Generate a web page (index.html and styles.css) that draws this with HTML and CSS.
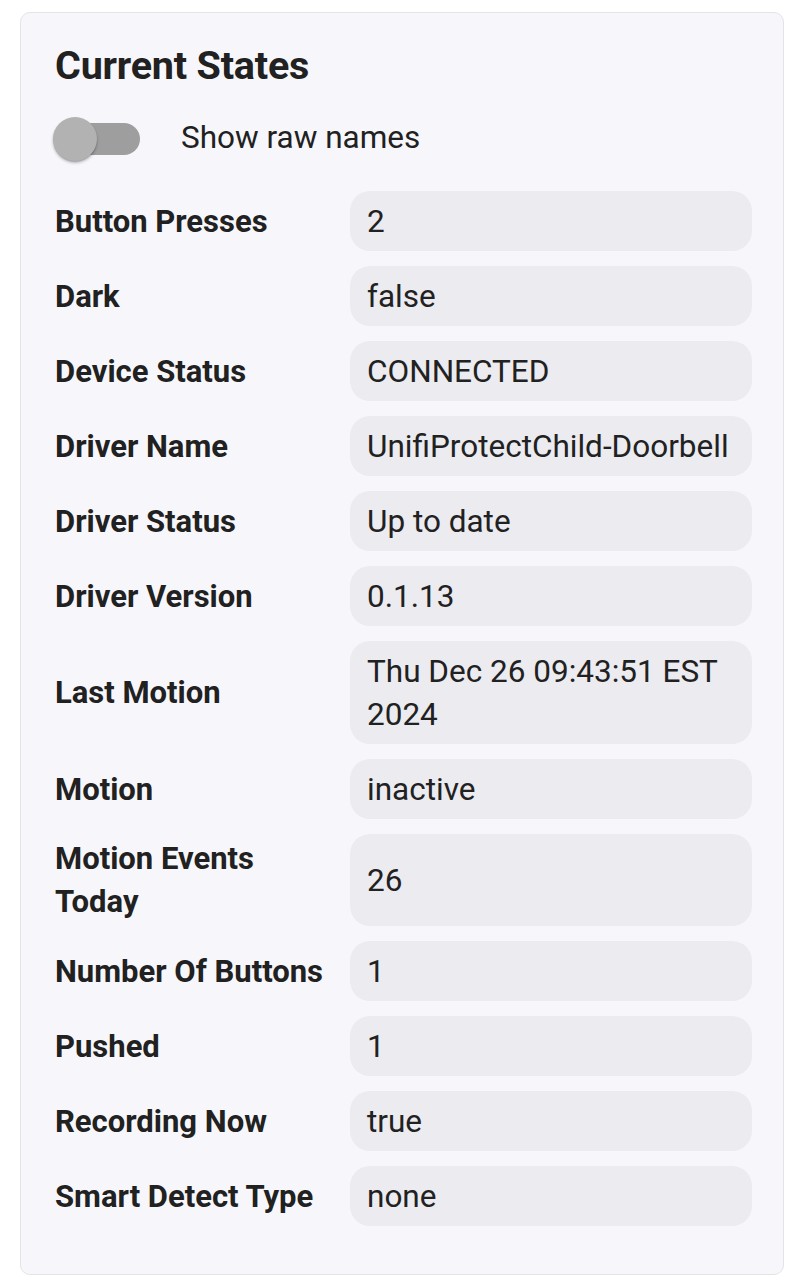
FILE: index.html
```html
<!DOCTYPE html>
<html lang="en">
<head>
<meta charset="utf-8">
<title>Current States</title>
<link rel="stylesheet" href="styles.css">
</head>
<body>
<section class="card">
  <h2 class="title">Current States</h2>
  <div class="toggle-row">
    <span class="switch"><span class="track"></span><span class="thumb"></span></span>
    <span class="toggle-label">Show raw names</span>
  </div>
  <div class="states">
    <div class="label">Button Presses</div><div class="value">2</div>
    <div class="label">Dark</div><div class="value">false</div>
    <div class="label">Device Status</div><div class="value">CONNECTED</div>
    <div class="label">Driver Name</div><div class="value">UnifiProtectChild-Doorbell</div>
    <div class="label">Driver Status</div><div class="value">Up to date</div>
    <div class="label">Driver Version</div><div class="value">0.1.13</div>
    <div class="label">Last Motion</div><div class="value">Thu Dec 26 09:43:51 EST 2024</div>
    <div class="label">Motion</div><div class="value">inactive</div>
    <div class="label">Motion Events Today</div><div class="value">26</div>
    <div class="label">Number Of Buttons</div><div class="value">1</div>
    <div class="label">Pushed</div><div class="value">1</div>
    <div class="label">Recording Now</div><div class="value">true</div>
    <div class="label">Smart Detect Type</div><div class="value">none</div>
  </div>
</section>
</body>
</html>
```

FILE: styles.css
```css
html, body {
  margin: 0;
  padding: 0;
  background: #ffffff;
}
body {
  font-family: Roboto, "Liberation Sans", sans-serif;
  color: #212121;
}
.card {
  margin: 12px 8px 0 20px;
  box-sizing: border-box;
  width: 764px;
  border: 1px solid #e4e4e8;
  border-radius: 10px;
  background: #f7f7fb;
  padding: 31px 31px 48px 34px;
}
.title {
  margin: 0;
  font-size: 39.5px;
  line-height: 44px;
  font-weight: 700;
  letter-spacing: -0.2px;
}
.toggle-row {
  display: flex;
  align-items: center;
  height: 48px;
  margin-top: 27px;
}
.switch {
  position: relative;
  display: inline-block;
  width: 88px;
  height: 48px;
  flex: none;
}
.track {
  position: absolute;
  left: 1px;
  top: 8px;
  width: 84px;
  height: 32px;
  border-radius: 16px;
  background: #9e9e9e;
}
.thumb {
  position: absolute;
  left: -2px;
  top: 2px;
  width: 44px;
  height: 44px;
  border-radius: 50%;
  background: #b2b2b2;
  box-shadow: 0 2px 3px rgba(0,0,0,0.25), 0 1px 1px rgba(0,0,0,0.14);
}
.toggle-label {
  margin-left: 38px;
  margin-bottom: 3px;
  font-size: 31.5px;
  line-height: 43px;
}
.states {
  display: grid;
  grid-template-columns: 280px 1fr;
  column-gap: 15px;
  row-gap: 15px;
  margin-top: 28px;
  align-items: center;
}
.label {
  font-size: 31px;
  line-height: 43px;
  font-weight: 700;
  padding: 3px 0;
}
.value {
  align-self: stretch;
  display: flex;
  align-items: center;
  background: #ebebf0;
  border-radius: 20px;
  padding: 8.5px 17px;
  font-size: 31.5px;
  line-height: 43px;
}
```
